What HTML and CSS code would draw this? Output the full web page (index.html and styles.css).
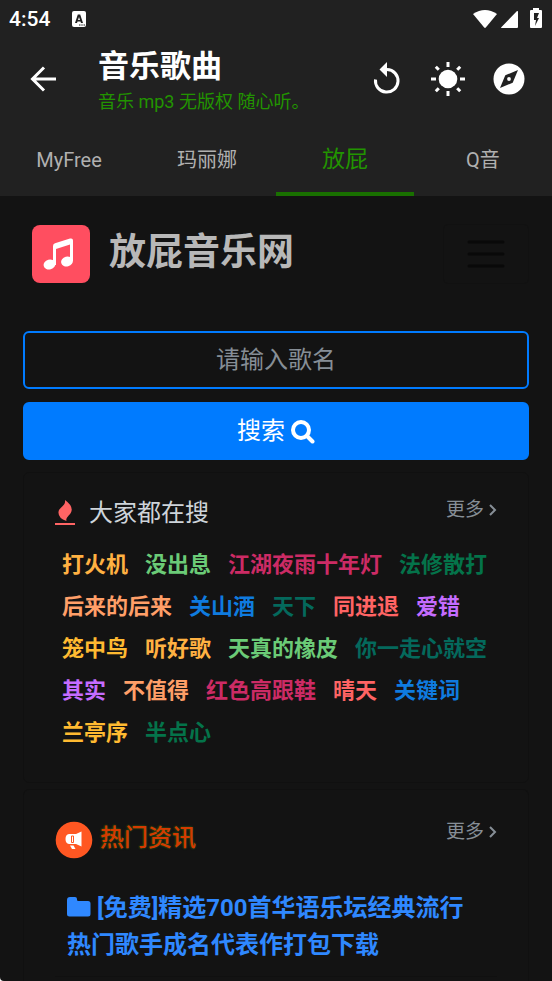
FILE: index.html
```html
<!DOCTYPE html>
<html lang="zh-CN">
<head>
<meta charset="utf-8">
<meta name="viewport" content="width=device-width, initial-scale=1">
<title>音乐歌曲</title>
<link rel="stylesheet" href="styles.css">
</head>
<body>
<div class="app">
  <header class="top">
    <div class="status">
      <span class="clock">4:54</span>
      <svg class="badge" width="15" height="17" viewBox="0 0 15 17" aria-hidden="true"><rect width="14" height="16" rx="2" fill="#fff"/><path d="M3 12 5.800 3.500h2.400L11 12H9l-.5-1.600h-3L5 12zM6 9h2L7 6z" fill="#212121"/><path d="M7 14h1.500M9.300 14h1.400M11.500 14h1.500" stroke="#212121"/></svg>
      <svg class="signals" width="70" height="22" viewBox="0 0 70 22" fill="#fff" aria-hidden="true">
        <path d="M0 6Q12-2 24 6L12.800 19.500Q12 20.300 11.200 19.500Z"/>
        <path d="M45 4v15q0 1-1 1H29q-1.500 0-.5-1L44 3q1-.5 1 1z"/>
        <path fill-rule="evenodd" d="M60 2V0h6v2h2q1 0 1 1v16q0 1-1 1H58q-1 0-1-1V3q0-1 1-1zM61 5v7h2l-1 6 4-8h-2l2-5z"/>
      </svg>
    </div>
    <div class="bar">
      <button class="icon back" aria-label="返回"><svg width="26" height="26" viewBox="0 0 26 26" fill="none" stroke="#fff" stroke-width="3"><path d="M26 13H3M14 1.500 2.500 13 14 24.500"/></svg></button>
      <div class="titles">
        <h1>音乐歌曲</h1>
        <p>音乐 mp3 无版权 随心听。</p>
      </div>
      <div class="actions">
        <button class="icon" aria-label="刷新"><svg width="34" height="34" viewBox="0 0 34 34"><path d="M5.500 17.500A11.300 11.300 0 1 0 17 7.500" fill="none" stroke="#fff" stroke-width="3"/><path d="M17 0v15L9.500 7.500z" fill="#fff"/></svg></button>
        <button class="icon" aria-label="主题"><svg width="34" height="34" viewBox="0 0 34 34" stroke="#fff" stroke-width="3"><circle cx="17" cy="17" r="9.300" fill="#fff" stroke="none"/><path d="M17 0v5M17 29v5M0 17h5M29 17h5M4.800 4.800l3 3M26.200 26.200l3 3M4.800 29.200l3-3M26.200 7.800l3-3"/></svg></button>
        <button class="icon" aria-label="浏览器"><svg width="34" height="34" viewBox="0 0 34 34"><circle cx="17" cy="17" r="15.500" fill="#fff"/><path d="M26 8l-5.300 12.700L8 26l5.300-12.700z" fill="#212121"/><circle cx="17" cy="17" r="1.900" fill="#fff"/></svg></button>
      </div>
    </div>
    <nav class="tabs">
      <a href="#myfree">MyFree</a>
      <a href="#manila">玛丽娜</a>
      <a href="#fangpi" class="active" aria-current="page">放屁</a>
      <a href="#qyin">Q音</a>
    </nav>
  </header>

  <main class="page">
    <div class="brand">
      <svg class="logo" width="60" height="60" viewBox="0 0 60 60" aria-hidden="true"><rect x="1" y="1" width="58" height="58" rx="8" fill="#ff4e60"/><g fill="#fff"><ellipse cx="18.500" cy="40.500" rx="6" ry="4.800" transform="rotate(-15 18.500 40.500)"/><ellipse cx="36" cy="37.500" rx="6" ry="4.800" transform="rotate(-15 36 37.500)"/><path d="M22 22q0-2 2-2.700l15-4.700q3-.8 3 2V37h-3V20.500l-14 4.500V41h-3z"/></g></svg>
      <h2>放屁音乐网</h2>
      <button class="menu" aria-label="菜单"><svg width="38" height="30" viewBox="0 0 38 30" stroke="#090909" stroke-width="3" stroke-linecap="round"><path d="M2 3h34M2 15h34M2 27h34"/></svg></button>
    </div>

    <form class="search">
      <input type="text" placeholder="请输入歌名" aria-label="歌名">
      <button type="button">搜索<svg width="24" height="24" viewBox="0 0 24 24" fill="none" stroke="#fff" stroke-width="4"><circle cx="10" cy="10" r="8"/><path d="M16 16l5.500 5.500" stroke-linecap="round"/></svg></button>
    </form>

    <section class="card hot">
      <div class="head">
        <svg width="20" height="26" viewBox="0 0 20 26" aria-hidden="true"><path d="M10 0q7 5 6.700 10c-.3 5-6.700 7-5.200 11Q3 18 3.500 12C4 7 11 6 10 0z" fill="#ff6464"/><path d="M0 24h20" stroke="#ff6464" stroke-width="2"/></svg>
        <h3>大家都在搜</h3>
        <a class="more" href="#hot">更多<svg width="8" height="12" viewBox="0 0 8 12" fill="none" stroke="#868e96" stroke-width="2"><path d="M1 1l5 5-5 5"/></svg></a>
      </div>
      <div class="tags">
        <a href="#s" class="orange">打火机</a><a href="#s" class="green">没出息</a><a href="#s" class="pink">江湖夜雨十年灯</a><a href="#s" class="forest">法修散打</a>
        <a href="#s" class="peach">后来的后来</a><a href="#s" class="blue">关山酒</a><a href="#s" class="teal">天下</a><a href="#s" class="red">同进退</a><a href="#s" class="purple">爱错</a>
        <a href="#s" class="yellow">笼中鸟</a><a href="#s" class="orange">听好歌</a><a href="#s" class="green">天真的橡皮</a><a href="#s" class="teal">你一走心就空</a>
        <a href="#s" class="purple">其实</a><a href="#s" class="peach">不值得</a><a href="#s" class="pink">红色高跟鞋</a><a href="#s" class="red">晴天</a><a href="#s" class="blue">关键词</a>
        <a href="#s" class="yellow">兰亭序</a><a href="#s" class="forest">半点心</a>
      </div>
    </section>

    <section class="card news">
      <div class="head">
        <svg width="38" height="38" viewBox="0 0 38 38" aria-hidden="true"><circle cx="19" cy="19" r="18.300" fill="#ff5722"/><path d="M26.500 10.500v15l-5.500-2.500H14q-3.500-.5-3.500-5t3.500-5h7z" fill="#fff"/><path d="M16.500 15v6.500h2V15z" fill="none" stroke="#ff5722"/><path d="M15 24.500h3.500l2 3.500h-3.500z" fill="#fff"/></svg>
        <h3>热门资讯</h3>
        <a class="more" href="#news">更多<svg width="8" height="12" viewBox="0 0 8 12" fill="none" stroke="#868e96" stroke-width="2"><path d="M1 1l5 5-5 5"/></svg></a>
      </div>
      <a class="article" href="#article"><svg width="24" height="20" viewBox="0 0 24 20" fill="#2f88ff" aria-hidden="true"><path d="M0 3q0-3 3-3h5q2 0 2 2v1q0 1 1.500 1H21q2.500 0 2.500 2.500V17q0 2.500-2.500 2.500H2.500Q0 19.500 0 17z"/></svg>[免费]精选700首华语乐坛经典流行热门歌手成名代表作打包下载</a>
    </section>
  </main>
</div>
</body>
</html>
```
FILE: styles.css
```css
* { box-sizing: border-box; }
html { background: #fff; }
body {
  margin: 0;
  font-family: Roboto, "Noto Sans CJK SC", sans-serif;
  color: #fff;
}
h1, h2, h3, p { margin: 0; }
a { text-decoration: none; color: inherit; }
button, input { font: inherit; color: inherit; }
svg { flex: none; }

.app {
  display: flex;
  flex-direction: column;
  min-height: 100vh;
  background: #131313;
  border-bottom-left-radius: 4px;
}

.top { background: #212121; }
.status {
  display: flex;
  align-items: center;
  height: 38px;
  padding: 0 9px;
}
.clock { font-size: 21px; font-weight: 500; line-height: 38px; }
.badge { margin-left: 22px; }
.signals { margin-left: auto; }

.bar {
  display: flex;
  align-items: center;
  height: 86px;
  padding: 0 26px 4px 30px;
}
.icon {
  display: flex;
  padding: 0;
  border: 0;
  background: none;
}
.titles { flex: 1; margin-left: 42px; padding-top: 6px; }
.titles h1 { font-size: 31px; line-height: 40px; font-weight: 700; }
.titles p { font-size: 18px; line-height: 30px; color: #229400; }
.actions { display: flex; gap: 27px; }

.tabs { display: grid; grid-template-columns: repeat(4, 1fr); }
.tabs a {
  height: 72px;
  border-bottom: 4px solid transparent;
  font-size: 20px;
  line-height: 72px;
  text-align: center;
  color: #b0b0b0;
}
.tabs .active {
  font-size: 23px;
  color: #229400;
  border-color: #197000;
}

.page {
  display: flex;
  flex-direction: column;
  flex: 1;
  padding: 28px 23px 0;
}
.brand { display: flex; align-items: center; padding-left: 8px; }
.brand h2 {
  flex: 1;
  margin-left: 18px;
  padding-bottom: 2px;
  font-size: 37px;
  line-height: 52px;
  font-weight: 700;
  color: #b8b8b8;
}
.menu {
  display: flex;
  align-items: center;
  justify-content: center;
  width: 86px;
  height: 60px;
  border: 1px solid #111;
  border-radius: 5px;
  background: none;
}

.search { display: grid; gap: 13px; margin-top: 47px; }
.search input, .search button {
  width: 100%;
  height: 58px;
  border: 2px solid #007bff;
  border-radius: 6px;
  font-size: 24px;
  text-align: center;
}
.search input { background: transparent; }
.search input::placeholder { color: #868e96; opacity: 1; }
.search button {
  display: flex;
  align-items: center;
  justify-content: center;
  gap: 6px;
  padding-bottom: 6px;
  background: #007bff;
}
.search button svg { margin-top: 6px; }

.card {
  margin-top: 12px;
  padding: 0 31px;
  border: 1px solid #101010;
  border-radius: 6px;
}
.head { display: flex; align-items: center; }
.head h3 { font-size: 24px; line-height: 40px; font-weight: 400; }
.more {
  display: flex;
  align-items: center;
  gap: 5px;
  margin-left: auto;
  padding-bottom: 6px;
  font-size: 19px;
  line-height: 28px;
  color: #868e96;
}

.hot { min-height: 311px; padding-top: 20px; }
.hot h3 { margin-left: 14px; color: #ced4da; }
.tags {
  display: flex;
  flex-wrap: wrap;
  column-gap: 17px;
  margin-top: 11px;
  padding-left: 7px;
  margin-right: -7px;
  font-size: 22px;
  line-height: 42px;
  font-weight: 700;
}
.orange { color: #ffb142; }
.green { color: #6bcb77; }
.pink { color: #cc2b65; }
.forest { color: #04734a; }
.peach { color: #ff9f68; }
.blue { color: #0f7bdf; }
.teal { color: #04695c; }
.red { color: #ff6464; }
.purple { color: #c56cff; }
.yellow { color: #ffba31; }

.news { flex: 1; margin-top: 6px; padding-top: 28px; border-bottom: 0; border-radius: 6px 6px 0 0; }
.news h3 {
  margin-left: 7px;
  padding-bottom: 4px;
  font-weight: 500;
  color: #d43a00;
  text-shadow: 0 0 2px #3f7a10;
}
.news .more { padding-bottom: 16px; }
.article {
  display: block;
  padding: 28px 12px 12px;
  border-bottom: 1px solid #101010;
  font-size: 24px;
  line-height: 37px;
  font-weight: 700;
  color: #2f88ff;
}
.article svg { margin-right: 6px; vertical-align: -1px; }
```
